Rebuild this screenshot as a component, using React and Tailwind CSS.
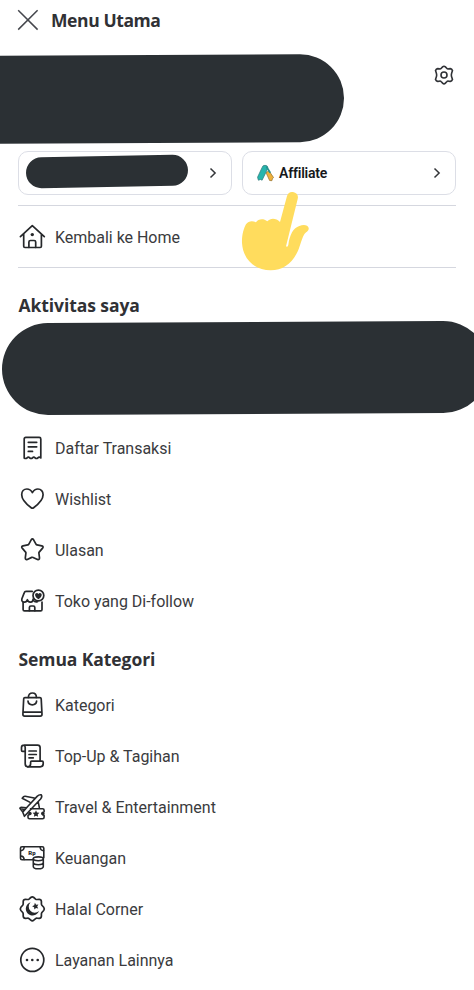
import React from "react";

function Icon({ children, className = "" }) {
  return (
    <svg
      viewBox="0 0 28 28"
      className={`size-7 shrink-0 ${className}`}
      fill="none"
      stroke="#26282b"
      strokeWidth="1.7"
      strokeLinecap="round"
      strokeLinejoin="round"
    >
      {children}
    </svg>
  );
}

const solid = { fill: "#26282b", stroke: "none" };

const HomeIcon = () => (
  <Icon>
    <path d="M2.4 13.6 14.3 2.6l12 11M5.7 11v12.3q0 1.2 1.2 1.2h15.3q1.2 0 1.2-1.2V11" />
    <path d="M10.9 24.3v-5.2q0-1.6 1.6-1.6h3.6q1.6 0 1.6 1.6v5.2" />
    <circle cx="14.3" cy="11.6" r="1.7" {...solid} />
  </Icon>
);

const ReceiptIcon = () => (
  <Icon>
    <path d="M6.2 24V5q0-1.6 1.6-1.6h13.4q1.6 0 1.6 1.6v19q-1.6-1.8-3 0-1.4 1-2.6 0-1.4-1.6-2.8 0-1.3 1-2.6 0-1.4-1.6-2.8 0-1.4 1-2.8 0Z" />
    <path d="M10.3 8.3h8.4M10.3 12.8h8.4M10.3 17.4h4.2" />
  </Icon>
);

const HeartIcon = () => (
  <Icon>
    <path d="M14.4 7.7C12.7 4.7 10.8 4 8.9 4 5.8 4 3.7 6.5 3.7 9.7c0 6 6.6 10.8 9.5 13 .8.6 1.6.6 2.4 0 2.9-2.2 9.5-7 9.5-13C25.1 6.5 23 4 19.9 4c-1.9 0-3.8.7-5.5 3.7Z" />
  </Icon>
);

const StarIcon = () => (
  <Icon>
    <path d="M13.2 3.8q1.2-1.8 2.4 0l2.5 4.5q.3.5.9.6l4.8 1q2.1.6.8 2.2l-3.4 4q-.4.5-.3 1l.6 4.8q0 2.2-2 1.5l-4.4-2q-.7-.3-1.4 0l-4.4 2q-2 .7-2-1.5l.6-4.8q.1-.5-.3-1l-3.4-4q-1.3-1.6.8-2.2l4.8-1q.6-.1.9-.6Z" />
  </Icon>
);

const StoreIcon = () => (
  <Icon>
    <path d="M14.2 4.4H8q-1.3 0-1.7 1.2l-2.4 6.2q-.7 3 2.2 3.3 2.6.2 3.3-2.4.8 2.6 3.1 2.4 2.6-.2 2.6-2.9" />
    <path d="M5.1 15v7.5q0 1.4 1.4 1.4h16.1q1.4 0 1.4-1.4V15" />
    <path d="M11.4 23.7v-3.2q0-1.5 1.5-1.5h2.4q1.5 0 1.5 1.5v3.2M15.4 13.4q1.4 2.1 4 1.4" />
    <circle cx="20.4" cy="8.5" r="5.4" />
    <path d="M20.4 12.2c-2-1.4-3.3-2.7-3.3-4.2 0-2 2.4-2.6 3.3-.9.9-1.7 3.3-1.1 3.3.9 0 1.5-1.3 2.8-3.3 4.2Z" {...solid} />
  </Icon>
);

const BagIcon = () => (
  <Icon>
    <path d="M6.9 6.6h15q1.2 0 1.3 1.2l.8 15.5q0 1.9-1.7 1.9H6.6q-1.7 0-1.7-1.9l.8-15.5q.1-1.2 1.2-1.2ZM5.2 21.1h18.5" />
    <path d="M10.4 6.4C10.4 3.7 12.1 2 14.4 2s4 1.7 4 4.4M10 10.2c.2 2.2 2 3.6 4.3 3.6s4.1-1.4 4.3-3.6" />
  </Icon>
);

const ScrollIcon = () => (
  <Icon>
    <path d="M7.2 9.3H4.6Q3.5 9.3 3.5 8.2V5.6Q3.5 3.1 6 3.1h13.6q2.5 0 2.5 2.5v13.5M6 3.1Q7.2 3.6 7.2 5.6v16.2q0 3 2.7 3" />
    <path d="M9.9 24.8q2.7 0 2.7-3v-1.5q0-1.1 1.1-1.1h10.4q1.1 0 1.1 1.1v1.5q0 3-3 3ZM11 9h7.3M11 12.5h7.3M11 15.8h4.3" />
  </Icon>
);

const TravelIcon = () => (
  <Icon>
    <g strokeWidth="1.6">
      <path d="M11.7 9.1 4.2 5.2l1.5-1.6q.6-.5 1.5-.4l9 1.8M9.7 13.5l9.4-10.1q2-2 4.1-1.6 1.4 1.7-.6 4.2L11.1 18.2M9.7 13.5l-4.6 5.1M3 14.3l-1.1.9 2.7 3.5 1.8 4.6 2.4-2.6 2.3-2.5M3 14.3l5.3.6M20.2 8.8l1.1 5.6" />
      <path d="M12.5 15.7h12.1q1.5 0 1.5 1.5v1.6q-1.7.3-1.7 1.8t1.7 1.8v1.8q0 1.5-1.5 1.5H11.5q-1.5 0-1.5-1.5v-1.8q1.5-.3 1.5-1.8" />
    </g>
    <path d="m18 17.3 1 2.2 2.4.3-1.7 1.6.4 2.4-2.1-1.1-2.1 1.1.4-2.4-1.7-1.6 2.4-.3Z" {...solid} />
    <circle cx="12" cy="20.5" r="1.7" {...solid} />
    <circle cx="24.8" cy="20.6" r="1.8" {...solid} />
    <path d="m3 15 4.8 1.2-2.2 2.5Z" {...solid} />
  </Icon>
);

const MoneyIcon = () => (
  <Icon>
    <g strokeWidth="1.6">
      <path d="M15 15.8H4q-1.5 0-1.5-1.5V4.3Q2.5 2.8 4 2.8h20.3q1.5 0 1.5 1.5v9.5" />
      <path d="M2.8 6.6q3 0 3.4-3.6M25.5 6.6q-3 0-3.4-3.6M2.8 12q3 .1 3.4 3.5" />
      <ellipse cx="20.3" cy="14.8" rx="5" ry="1.9" />
      <path d="M15.3 14.8v7.6c0 1.4 2.2 2.3 5 2.3s5-.9 5-2.3v-7.6M15.3 18.6c0 1.4 2.2 2.2 5 2.2s5-.8 5-2.2" />
    </g>
    <text x="14" y="11.4" textAnchor="middle" fontFamily="Roboto, sans-serif" fontSize="6" fontWeight="900" {...solid}>Rp</text>
  </Icon>
);

const HalalIcon = () => (
  <Icon>
    <path d="M12.8 2.5q1.5-1.3 3 0l1.8 1.6q.6.5 1.5.4l2.1-.1q2 0 2.2 2.1l0 2.2q0 .8.5 1.5l1.8 2q1.2 1.7 0 3.3l-1.8 2q-.5.7-.5 1.5v2.2q-.2 2.1-2.2 2.1l-2.1-.1q-.9-.1-1.5.4l-1.8 1.6q-1.5 1.3-3 0L11 23.6q-.6-.5-1.5-.4l-2.1.1q-2 0-2.2-2.1V19q0-.8-.5-1.5l-1.8-2q-1.2-1.6 0-3.3l1.8-2q.5-.7.5-1.5V6.5q.2-2.1 2.2-2.1l2.1.1q.9.1 1.5-.4Z" />
    <path d="M12.6 7.2a6.8 6.8 0 1 0 8.4 8.8 5.8 5.8 0 0 1-8.4-8.8Z" {...solid} />
    <path d="m16.9 7.8 1.2 2 2.3-.4-1.2 2 1 2.1-2.2-.5-1.6 1.6-.3-2.3-2-1 2.1-1Z" {...solid} />
  </Icon>
);

const MoreIcon = () => (
  <Icon>
    <circle cx="14.3" cy="13.9" r="11.5" />
    <g {...solid}>
      <circle cx="9" cy="14" r="1.3" />
      <circle cx="14.3" cy="14" r="1.3" />
      <circle cx="19.7" cy="14" r="1.3" />
    </g>
  </Icon>
);

const activities = [
  [ReceiptIcon, "Daftar Transaksi"],
  [HeartIcon, "Wishlist"],
  [StarIcon, "Ulasan"],
  [StoreIcon, "Toko yang Di-follow"],
];

const categories = [
  [BagIcon, "Kategori"],
  [ScrollIcon, "Top-Up & Tagihan"],
  [TravelIcon, "Travel & Entertainment"],
  [MoneyIcon, "Keuangan"],
  [HalalIcon, "Halal Corner"],
  [MoreIcon, "Layanan Lainnya"],
];

function MenuRow({ icon: Glyph, label, height = "h-[50.9px]" }) {
  return (
    <div className={`flex items-center gap-[9px] pl-[18px] ${height}`}>
      <Glyph />
      <span className="pt-[2px] text-[16px] leading-6 tracking-[-0.02px] text-[#3a3b3e]">{label}</span>
    </div>
  );
}

function Heading({ children, className }) {
  return (
    <h2 className={`flex items-center pl-[18.5px] font-['Open_Sans',sans-serif] text-[17.5px] font-bold tracking-[-0.08px] text-[#303135] ${className}`}>
      {children}
    </h2>
  );
}

function Chevron() {
  return (
    <svg viewBox="0 0 8 12" className="h-3 w-2 shrink-0" fill="none" stroke="#333538" strokeWidth="1.5">
      <path d="m1.5 1.5 4.6 4.5-4.6 4.5" />
    </svg>
  );
}

function PointingHand() {
  return (
    <svg viewBox="30 150 215 245" className="absolute top-[190px] left-[240px] h-[81.7px] w-[71.7px]" fill="#ffdc5d">
      <path d="M171 168c3-10 9-13 18-12 11 2 17 9 14 21l-35 142c4 3 6-1 7-5 4-29 15-51 33-56 13-5 26-3 28 6 1 9-9 12-14 20-9 16-12 39-23 58-17 31-43 49-77 49-48 0-83-33-86-82-1-23 5-44 12-56 7-10 19-11 30-6 6-10 22-13 34-3 10-11 26-10 38 2Z" />
    </svg>
  );
}

export default function App() {
  return (
    <main className="relative h-[990px] w-[474px] overflow-hidden bg-white font-[Roboto,sans-serif]">
      <header className="flex h-10 items-center gap-3 pl-[17px]">
        <svg viewBox="0 0 22 22" className="size-[22px]" fill="none" stroke="#45474d" strokeWidth="1.5">
          <path d="m1.2 1.2 19.4 19.4M20.6 1.2 1.2 20.6" />
        </svg>
        <h1 className="font-['Open_Sans',sans-serif] text-[17.5px] font-bold tracking-[-0.4px] text-[#303135]">Menu Utama</h1>
      </header>

      <section className="flex h-[111px] items-start justify-between pr-5">
        <div className="mt-[15.4px] -ml-[60px] h-[87.5px] w-[403.5px] -rotate-[0.3deg] rounded-full bg-[#2b3034]" />
        <svg viewBox="0 0 20 20" className="mt-[25px] size-5" fill="none" stroke="#303236" strokeWidth="1.6" strokeLinejoin="round">
          <path d="M8.6 1.9Q10 .5 11.4 1.9L12.7 3.3Q13.4 4.1 14.5 3.9L16.4 3.6Q17.8 3.7 18.5 5.6L17.7 7.9Q17 10 17.7 12.1L18.5 14.4Q17.8 16.3 16.4 16.4L14.5 16.1Q13.4 15.9 12.7 16.7L11.4 18.1Q10 19.5 8.6 18.1L7.3 16.7Q6.6 15.9 5.5 16.1L3.6 16.4Q2.2 16.3 1.5 14.4L2.3 12.1Q3 10 2.3 7.9L1.5 5.6Q2.2 3.7 3.6 3.6L5.5 3.9Q6.6 4.1 7.3 3.3Z" />
          <circle cx="10" cy="10" r="3" />
        </svg>
      </section>

      <section className="grid h-11 grid-cols-2 gap-[10px] px-[18px]">
        <div className="flex items-center justify-between rounded-[10px] border-[1.5px] border-[#dcdee6] pr-[14px] pl-[7px]">
          <div className="mb-[3px] h-[31px] w-[162px] -rotate-[1deg] rounded-full bg-[#2b3034]" />
          <Chevron />
        </div>
        <div className="flex items-center rounded-[10px] border-[1.5px] border-[#dcdee6] pr-[14px] pl-[14px]">
          <svg viewBox="0 0 18 18" className="size-[18px] shrink-0" strokeWidth=".7" strokeLinejoin="round">
            <path d="m9 8.6 3-1.8 4.6 6.8-1.1.9-.6 2.2-2.3-.2Z" fill="#edb13b" stroke="#94702f" />
            <path d="M5 3.7Q5.5 1.3 8 1.3q2.8 0 2.8 2.6L9 8.2 5.1 16.2l-1.6-.7-2.1.7-.9-2.9Z" fill="#26b5ad" stroke="#317879" />
            <path d="m9.8 3.2 3.1 5" stroke="#26918f" strokeWidth="1.8" strokeLinecap="round" />
          </svg>
          <span className="ml-[4px] grow text-[14px] font-semibold tracking-[-0.2px] text-[#16181b]">Affiliate</span>
          <Chevron />
        </div>
      </section>

      <nav className="mx-[18px] mt-[10px] h-[63px] border-y border-[#d5d7df]">
        <div className="-ml-[18px]">
          <MenuRow icon={HomeIcon} label="Kembali ke Home" height="h-[61px]" />
        </div>
      </nav>

      <Heading className="h-[53.5px] pt-[21px]">Aktivitas saya</Heading>
      <div className="ml-[2px] h-[92px] w-[487px] -rotate-[0.3deg] rounded-full bg-[#2b3034]" />
      <nav className="mt-[9.5px]">
        {activities.map(([icon, label]) => (
          <MenuRow key={label} icon={icon} label={label} />
        ))}
      </nav>

      <Heading className="h-[53.4px] pt-[11.5px]">Semua Kategori</Heading>
      <nav>
        {categories.map(([icon, label]) => (
          <MenuRow key={label} icon={icon} label={label} />
        ))}
      </nav>

      <PointingHand />
    </main>
  );
}
